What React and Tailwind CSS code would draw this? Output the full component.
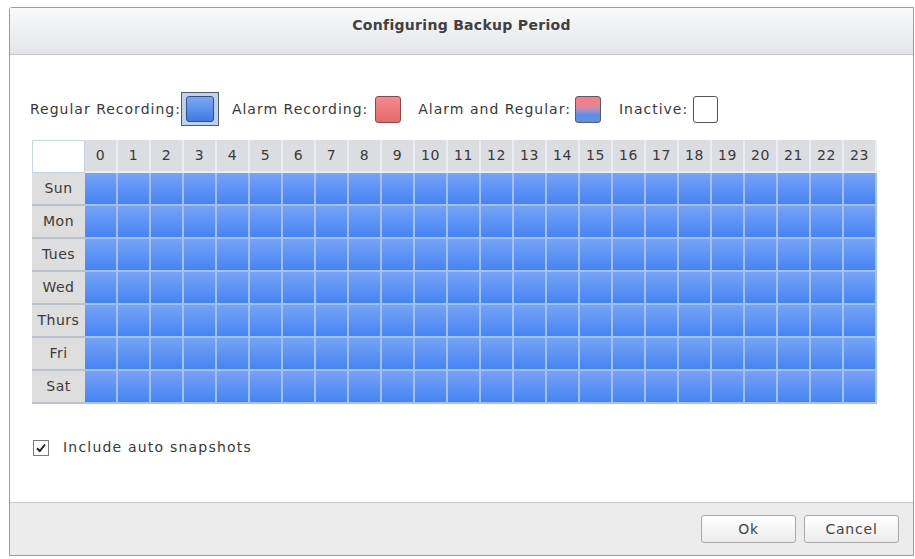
import React from "react";

const hours = Array.from({ length: 24 }, (_, i) => i);
const days = ["Sun", "Mon", "Tues", "Wed", "Thurs", "Fri", "Sat"];

export default function App() {
  return (
    <div
      className="w-[915px] h-[559px] bg-white pt-[7px] pl-[9px] overflow-hidden text-[#3a3a3a]"
      style={{ fontFamily: '"DejaVu Sans", Verdana, sans-serif' }}
    >
      <div className="w-[905px] h-[549px] border border-[#9c9c9c] rounded-tl-[3px] flex flex-col bg-white">
        <div className="h-[47px] flex items-center justify-center border-b border-[#c4c4c4] bg-gradient-to-b from-[#fafafa] to-[#e3e5e8]">
          <span className="text-[14px] font-bold text-[#404040] tracking-[0.3px] pb-[11px]">
            Configuring Backup Period
          </span>
        </div>

        <div className="flex-1 flex flex-col pl-[20px]">
          <div className="mt-[37px] h-[34px] flex items-center text-[14px] tracking-[1px]">
            <span>Regular Recording:</span>
            <span className="ml-[0px] w-[38px] h-[34px] border border-[#5a5a5a] bg-[#bcd3ef] flex items-center justify-center">
              <span className="w-[28px] h-[26px] rounded-[3px] border border-[#2f4f86] bg-gradient-to-b from-[#7fa8f2] to-[#3f78e6]" />
            </span>
            <span className="ml-[13px]">Alarm Recording:</span>
            <span className="ml-[7px] w-[26px] h-[27px] rounded-[3px] border border-[#8a4a4a] bg-gradient-to-b from-[#f48a8e] to-[#e8686c]" />
            <span className="ml-[17px]">Alarm and Regular:</span>
            <span className="ml-[4px] w-[26px] h-[27px] rounded-[3px] border border-[#5a5a6a] bg-gradient-to-b from-[#f38088] from-30% to-[#5d8ee8] to-70%" />
            <span className="ml-[18px]">Inactive:</span>
            <span className="ml-[5px] w-[25px] h-[27px] rounded-[3px] border border-[#555] bg-white" />
          </div>

          <div className="mt-[14px] ml-[2px] w-[845px] flex flex-col text-[14px] tracking-[0.5px]">
            <div className="flex h-[33px]">
              <div className="w-[53px] h-[33px] bg-white border border-[#c9d4e2]" />
              {hours.map((h) => (
                <div
                  key={h}
                  className="w-[33px] h-[33px] bg-[#dcdde0] border-r-2 border-b-2 border-[#e9eef5] flex items-center justify-center"
                >
                  {h}
                </div>
              ))}
            </div>
            {days.map((d) => (
              <div key={d} className="flex h-[33px]">
                <div className="w-[53px] h-[33px] bg-[#dedede] border-b-2 border-[#b9c3d0] flex items-center justify-center">
                  {d}
                </div>
                {hours.map((h) => (
                  <div
                    key={h}
                    className="w-[33px] h-[33px] bg-gradient-to-b from-[#76a3f6] to-[#4683f3] border-r-2 border-b-2 border-[#a4c1f4]"
                  />
                ))}
              </div>
            ))}
          </div>

          <div className="mt-[33px] ml-[3px] flex items-center text-[14px] tracking-[1.2px]">
            <span className="w-[16px] h-[16px] border border-[#7a7a7a] bg-white flex items-center justify-center">
              <svg width="12" height="12" viewBox="0 0 12 12">
                <path d="M2 6.2 L4.8 9 L10 2.5" fill="none" stroke="#222" strokeWidth="2" />
              </svg>
            </span>
            <span className="ml-[14px]">Include auto snapshots</span>
          </div>
        </div>

        <div className="h-[53px] border-t border-[#c8c8c8] bg-[#ececec] flex items-center justify-end pr-[14px] gap-[8px]">
          <button className="w-[95px] h-[28px] border border-[#a8a8a8] rounded-[3px] bg-gradient-to-b from-white to-[#ececec] text-[14px] tracking-[0.8px] text-[#444]">
            Ok
          </button>
          <button className="w-[95px] h-[28px] border border-[#a8a8a8] rounded-[3px] bg-gradient-to-b from-white to-[#ececec] text-[14px] tracking-[0.8px] text-[#444]">
            Cancel
          </button>
        </div>
      </div>
    </div>
  );
}
